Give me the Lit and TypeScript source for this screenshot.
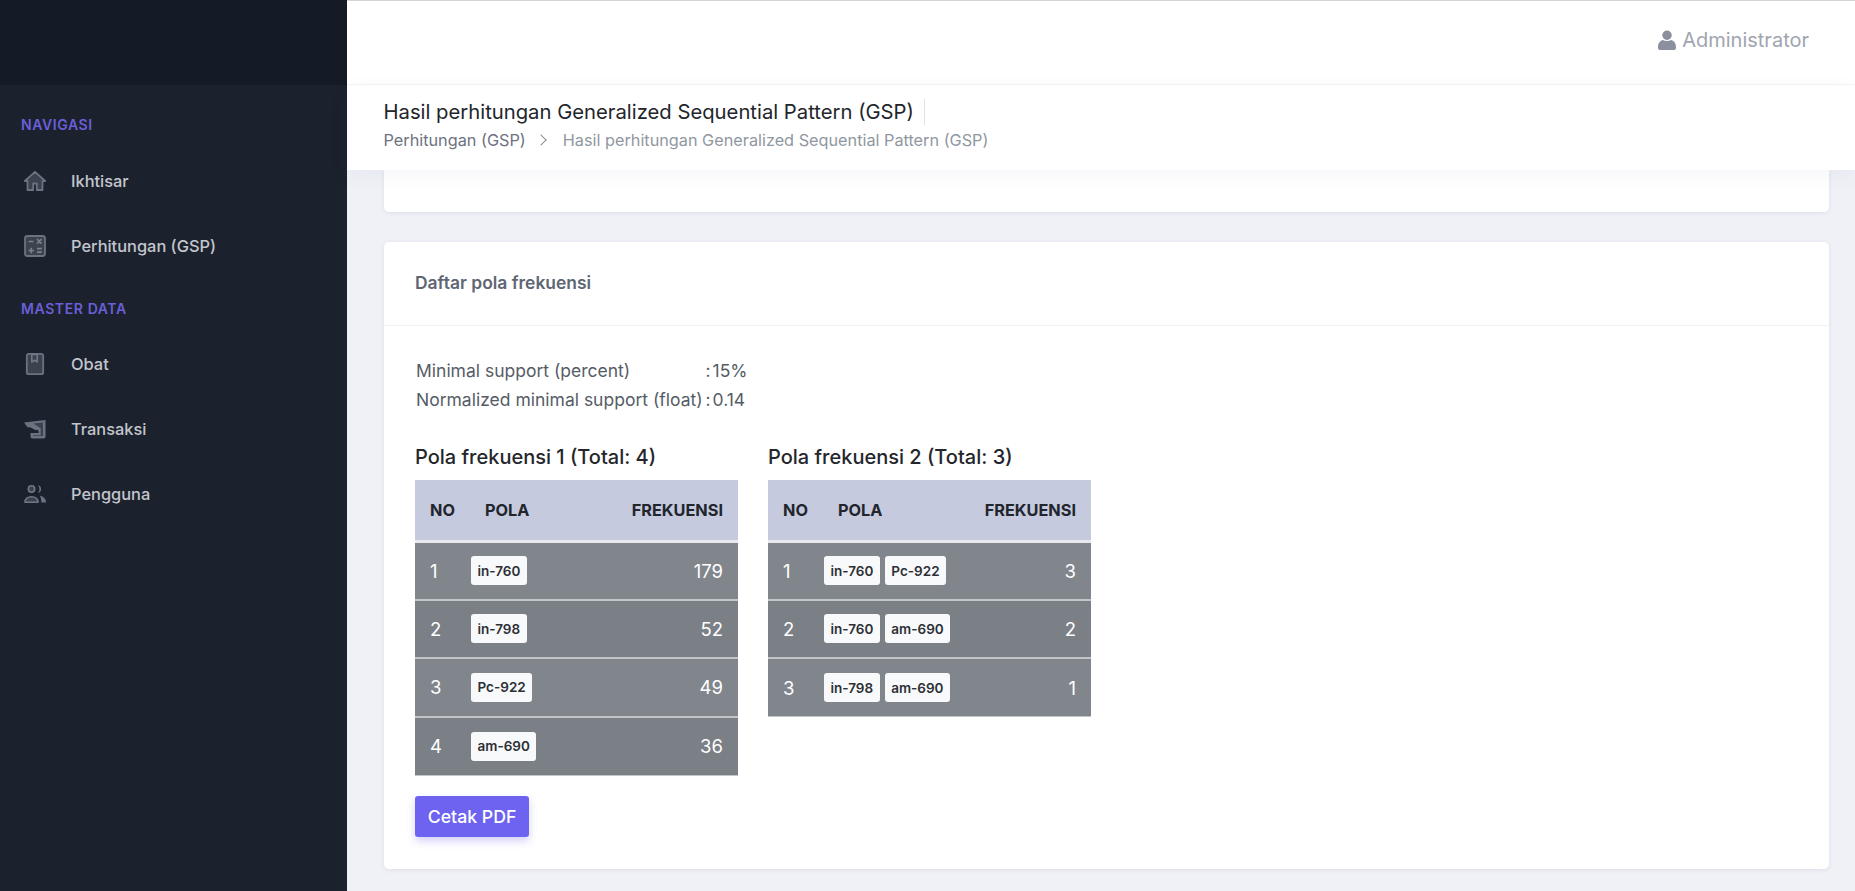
import { LitElement, html, css, svg } from "lit";
import { customElement } from "lit/decorators.js";

const icons: Record<string, unknown> = {
  home: svg`<path class="d" d="M12 4.500 5.500 10.500V20h4v-6h5v6h4v-9.500z"/><path class="s" d="M1.800 12 12 2.800 22.200 12h-2.700v9h-5.700v-6.500h-3.600V21H4.500v-9z"/>`,
  calc: svg`<rect class="d s" x="2" y="2" width="20" height="20" rx="2.500"/><path class="l" d="M5.500 7.500h5M14 5.200l4.500 4.500M18.500 5.200 14 9.700M5.500 16.500h5.500M8.250 13.800v5.400M14 14.700h4.800M14 18.200h4.800"/>`,
  book: svg`<rect class="d s" x="3.800" y="1.800" width="16.400" height="20.400" rx="2"/><path class="o" d="M8.800 2.500h5.400v7.500l-2.700-1.700L8.800 10z"/>`,
  trans: svg`<path class="b2" d="M1 5.500 22.500 3v16.500a2 2 0 0 1-2 2H9.500a2 2 0 0 1-2-2V16h8.200l-.6-3.300-2.200.6L7 10.200H4.500L1 5.500Z"/><path class="k" d="M10.500 6.500 20 5.500v13.500h-9.800v-.7h7.500v-7L10.500 6.500Z"/>`,
  users: svg`<circle class="o" cx="8.500" cy="7" r="3.200"/><path class="o" d="M2 20.300c0-3.600 3-5.600 6.500-5.600s6.500 2 6.500 5.600z"/><path class="b" d="M15 3.200a4 4 0 0 1 0 7.800 6.500 6.500 0 0 0 0-7.800ZM16.800 13.800c3.600.6 6.200 2.900 6.200 6.700h-4.700c0-2.600-.3-4.800-1.500-6.700Z"/>`,
};

const tables = [
  { title: "Pola frekuensi 1 (Total: 4)", rows: [[["in-760"], 179], [["in-798"], 52], [["Pc-922"], 49], [["am-690"], 36]] },
  { title: "Pola frekuensi 2 (Total: 3)", rows: [[["in-760", "Pc-922"], 3], [["in-760", "am-690"], 2], [["in-798", "am-690"], 1]] },
] as { title: string; rows: [string[], number][] }[];

@customElement("app-root")
export class AppRoot extends LitElement {
  static styles = css`
    :host { display: block; height: 891px; overflow: hidden; font-family: Inter, "Liberation Sans", sans-serif; background: #f0f1f7; }
    * { box-sizing: border-box; }
    .app { display: flex; height: 891px; }
    .side { width: 347px; flex: none; background: #1c212e; display: flex; flex-direction: column; }
    .brand { height: 85px; background: #141b27; flex: none; }
    .nav { padding: 32px 0 0 21px; display: flex; flex-direction: column; }
    .label { color: #6a5fd8; font-size: 14px; font-weight: 600; letter-spacing: .6px; line-height: 16px; }
    .label.second { margin-top: 24px; }
    .item { display: flex; align-items: center; height: 65px; padding-left: 2px; color: #c2c6cc; font-size: 16.400px; font-weight: 500; }
    .items { margin-top: 15px; margin-bottom: -1px; }
    .label.second + .items { margin-top: 14px; }
    .item svg { width: 24px; height: 24px; margin-right: 24px; flex: none; }
    .item svg .d { fill: #3c434f; }
    .item svg .s { fill: #3c434f; stroke: #6a7380; stroke-width: 1.800; stroke-linejoin: round; }
    .item svg .l { fill: none; stroke: #79818d; stroke-width: 1.700; }
    .item svg .o { fill: #3c434f; stroke: #6f7885; stroke-width: 1.600; stroke-linejoin: round; }
    .item svg .b { fill: #6a7380; }
    .item svg .b2 { fill: #6a7380; }
    .item svg .k { fill: #3c434f; }
    .main { flex: 1; min-width: 0; display: flex; flex-direction: column; }
    .top { height: 85px; background: #fff; border-top: 1px solid #d5d5d5; border-bottom: 1px solid #f3f4f7; display: flex; align-items: flex-start; justify-content: flex-end; padding: 27px 46px 0 0; flex: none; }
    .user { display: flex; align-items: center; gap: 6px; color: #a0a5b0; font-size: 20px; line-height: 24px; }
    .user svg { width: 18px; height: 20px; fill: #8a909d; }
    .crumbs { height: 85px; background: #fff; padding: 14px 37px 0 36.500px; box-shadow: 0 6px 20px rgba(60,70,110,.05); position: relative; z-index: 1; flex: none; }
    .h { display: flex; align-items: center; height: 26px; color: #22252b; font-size: 20.250px; font-weight: 400; }
    .h span { padding-right: 10px; border-right: 1px solid #dfe2ea; line-height: 26px; }
    .bc { display: flex; align-items: center; margin-top: 4px; font-size: 16.250px; line-height: 22px; color: #6c7280; }
    .bc i { width: 8px; height: 8px; border-top: 1.200px solid #8a909b; border-right: 1.200px solid #8a909b; transform: rotate(45deg); margin: 0 18px 0 11px; }
    .bc b { font-weight: 400; color: #9097a1; }
    .content { padding: 0 26px 0 37px; display: flex; flex-direction: column; gap: 30px; }
    .card { background: #fff; border-radius: 5px; box-shadow: 0 1px 4px rgba(60,70,110,.1); }
    .stub { height: 42px; border-radius: 0 0 5px 5px; }
    .card-h { height: 84px; padding: 0 31px 2px; display: flex; align-items: center; border-bottom: 1px solid #f1f2f5; font-size: 17.450px; font-weight: 600; color: #5e6673; }
    .card-b { padding: 30px 31px 31px; height: 543px; }
    .info { display: grid; grid-template-columns: max-content 4px auto; width: max-content; column-gap: 3px; margin-left: 1px; font-size: 17.500px; line-height: 29px; color: #565c66; }
    .tables { display: flex; gap: 30px; margin-top: 29px; align-items: flex-start; }
    .tb h5 { margin: 0; font-size: 20px; font-weight: 500; color: #24262b; line-height: 28px; height: 37px; }
    table { width: 323px; border-collapse: collapse; font-size: 18.500px; color: #fff; }
    th { background: #c5cadf; color: #22252c; font-size: 16.300px; font-weight: 700; height: 61px; text-align: left; padding: 0 15px; white-space: nowrap; border-bottom: 3px solid #e8e9ef; }
    th.pola { padding-left: 16px; }
    td { height: 58.500px; padding: 0 15px; border-bottom: 2px solid #c1c4c8; }
    tr:last-child td { border-bottom: 1px solid #c1c4c8; }
    tbody tr:nth-child(odd) td { background: #81868d; }
    tbody tr:nth-child(even) td { background: #7b8087; }
    td.no { width: 54px; padding-right: 0; }
    td.p { padding: 0 0 0 2px; }
    th.no { width: 54px; padding-right: 0; }
    .num { text-align: right; }
    .pills { display: flex; gap: 5px; }
    .pill { background: #f8f9fa; color: #2c2f35; font-size: 13.500px; font-weight: 600; height: 29px; border-radius: 3px; padding: 0 6.500px; display: flex; align-items: center; }
    button { display: block; margin-top: 20px; width: 114px; height: 41px; border: none; border-radius: 3px; background: #6e63f0; color: #fff; font: 500 17.700px Inter, sans-serif; box-shadow: 0 4px 8px rgba(110,99,240,.3); padding: 0; }
  `;

  private navItem(icon: string, text: string) {
    return html`<div class="item"><svg viewBox="0 0 24 24">${icons[icon]}</svg>${text}</div>`;
  }

  render() {
    return html`<div class="app">
      <aside class="side">
        <div class="brand"></div>
        <nav class="nav">
          <div class="label">NAVIGASI</div>
          <div class="items">${this.navItem("home", "Ikhtisar")}${this.navItem("calc", "Perhitungan (GSP)")}</div>
          <div class="label second">MASTER DATA</div>
          <div class="items">${this.navItem("book", "Obat")}${this.navItem("trans", "Transaksi")}${this.navItem("users", "Pengguna")}</div>
        </nav>
      </aside>
      <div class="main">
        <header class="top"><div class="user"><svg viewBox="0 0 19 21"><circle cx="9.500" cy="5.500" r="5"/><path d="M0 18c0-5 3-7 5-7.500 2.500 1.500 6.500 1.500 9 0 2 .5 5 2.500 5 7.500v1a2 2 0 0 1-2 2H2a2 2 0 0 1-2-2v-1Z"/></svg>Administrator</div></header>
        <div class="crumbs">
          <div class="h"><span>Hasil perhitungan Generalized Sequential Pattern (GSP)</span></div>
          <div class="bc">Perhitungan (GSP)<i></i><b>Hasil perhitungan Generalized Sequential Pattern (GSP)</b></div>
        </div>
        <div class="content">
          <div class="card stub"></div>
          <div class="card">
            <div class="card-h">Daftar pola frekuensi</div>
            <div class="card-b">
              <div class="info">
                <span>Minimal support (percent)</span><span>:</span><span>15%</span>
                <span>Normalized minimal support (float)</span><span>:</span><span>0.14</span>
              </div>
              <div class="tables">
                ${tables.map((t) => html`<div class="tb"><h5>${t.title}</h5>
                  <table><thead><tr><th class="no">NO</th><th class="pola">POLA</th><th class="num">FREKUENSI</th></tr></thead>
                  <tbody>${t.rows.map((r, i) => html`<tr><td class="no">${i + 1}</td><td class="p"><div class="pills">${r[0].map((p) => html`<span class="pill">${p}</span>`)}</div></td><td class="num">${r[1]}</td></tr>`)}</tbody></table></div>`)}
              </div>
              <button>Cetak PDF</button>
            </div>
          </div>
        </div>
      </div>
    </div>`;
  }
}
